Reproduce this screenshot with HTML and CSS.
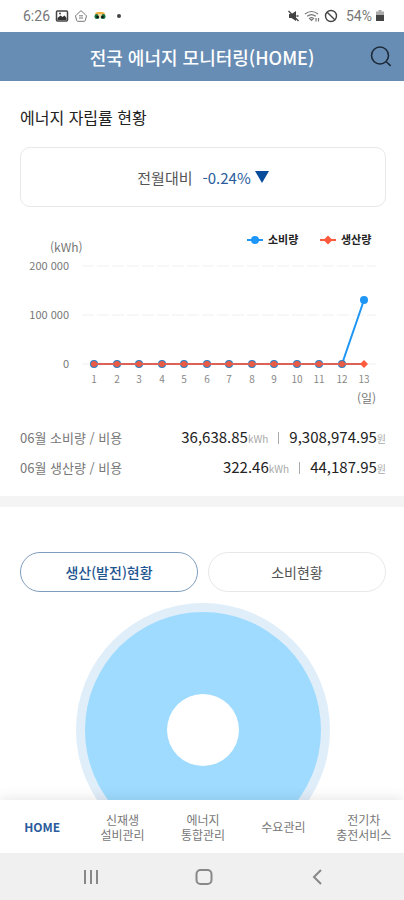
FILE: index.html
```html
<!DOCTYPE html>
<html lang="ko">
<head>
    <meta charset="UTF-8">
    <meta name="viewport" content="width=device-width, initial-scale=1">
    <title>전국 에너지 모니터링</title>
    <link rel="stylesheet" href="styles.css">
</head>
<body>
    <div class="status-bar">
        <div class="status-group">
            <span>6:26</span>
            <svg width="14" height="14" viewBox="0 0 14 14">
                <rect x="1.5" y="2" width="11" height="10" rx="1" fill="none" stroke="#444" stroke-width="1.5"/>
                <path d="M2.500 11V9l3-2.500 2 1.500 2-1.500 2 2.500v2z" fill="#333"/>
                <circle cx="5" cy="4.500" r="1" fill="#444"/>
            </svg>
            <svg width="14" height="14" viewBox="0 0 14 14" fill="none" stroke="#777">
                <path d="M2.500 5.800 7 1.700l4.500 4.100 1 1-1.200 4.700q-.2.800-1 .8H3.700q-.8 0-1-.8L1.500 6.800z"/>
                <path d="M5 6.800h4M5 9h4"/>
            </svg>
            <svg width="14" height="14" viewBox="0 0 14 14">
                <path d="M2 6q0-3 3-3h4q3 0 3 3z" fill="#f0b13c"/>
                <circle cx="4" cy="7.500" r="2.500" fill="#13713f"/>
                <circle cx="10" cy="7.500" r="2.500" fill="#13713f"/>
                <path d="M4.500 5h5L7 9.500z" fill="#f6d8a5"/>
                <circle cx="4.500" cy="8" r="1.200" fill="#111"/>
                <circle cx="9.500" cy="8" r="1.200" fill="#111"/>
            </svg>
            <span class="dot"></span>
        </div>
        <div class="status-group status-right">
            <svg width="13" height="14" viewBox="0 0 13 14">
                <path d="M2 5h2.500L9 2v10L4.500 9H2z" fill="#444"/>
                <path d="M1.500 2 11.500 12M9.500 7h2" stroke="#444" stroke-width="1.300"/>
            </svg>
            <svg width="16" height="14" viewBox="0 0 16 14" fill="none" stroke="#777" stroke-width="1.200">
                <path d="M1 5q6.500-5 13 0M3.200 7.300q4.300-3.300 8.600 0M5.400 9.400q2.100-1.500 4.200 0L7.500 11.500z"/>
                <path d="M12 12.500V9M14.500 9v3.500"/>
            </svg>
            <svg width="14" height="14" viewBox="0 0 14 14" fill="none" stroke="#444" stroke-width="1.400">
                <circle cx="7" cy="7" r="5.500"/>
                <path d="m3.200 3.200 7.600 7.600"/>
            </svg>
            <span class="battery-text">54%</span>
            <svg width="8" height="14" viewBox="0 0 8 14">
                <path d="M2.500 1h3v1.500H8V6H0V2.500h2.500z" fill="#aaa"/>
                <path d="M0 6h8v6H0z" fill="#444"/>
            </svg>
        </div>
    </div>

    <header class="header">
        <h1>전국 에너지 모니터링(HOME)</h1>
        <button class="search-button" type="button" aria-label="검색">
            <svg width="24" height="24" viewBox="0 0 24 24" fill="none" stroke="#1d2b3a" stroke-width="1.600">
                <circle cx="11" cy="10.500" r="8.500"/>
                <path d="m17 16.500 4.700 4.300"/>
            </svg>
        </button>
    </header>

    <main class="content">
        <section class="summary">
            <h2>에너지 자립률 현황</h2>
            <div class="compare-card">
                <span>전월대비</span>
                <span class="compare-value">-0.24%</span>
                <svg width="14" height="12" viewBox="0 0 14 12"><path d="M0 0h14L7 12z" fill="#0a4c9c"/></svg>
            </div>
        </section>

        <svg class="chart" viewBox="0 0 404 216" role="img" aria-label="소비량과 생산량">
            <!-- legend -->
            <g class="legend">
                <path d="M247 33h16" stroke="#1e96f5" stroke-width="2"/>
                <circle cx="255" cy="33" r="4" fill="#1e96f5"/>
                <text x="268" y="37">소비량</text>
                <path d="M320 33h16" stroke="#fb5a3c" stroke-width="2"/>
                <path d="M328 28.500l4.500 4.500-4.500 4.500-4.500-4.500z" fill="#fb5a3c"/>
                <text x="341" y="37">생산량</text>
            </g>
            <!-- axes -->
            <g class="unit">
                <text x="50" y="45">(kWh)</text>
                <text x="357" y="196">(일)</text>
            </g>
            <path class="grid-line" d="M82 59h294M82 108h294M82 157h294"/>
            <g class="y-labels">
                <text x="69" y="63">200 000</text>
                <text x="69" y="112">100 000</text>
                <text x="69" y="161">0</text>
            </g>
            <g class="x-labels">
                <text x="94" y="176">1</text>
                <text x="117" y="176">2</text>
                <text x="139" y="176">3</text>
                <text x="162" y="176">4</text>
                <text x="184" y="176">5</text>
                <text x="207" y="176">6</text>
                <text x="229" y="176">7</text>
                <text x="252" y="176">8</text>
                <text x="274" y="176">9</text>
                <text x="297" y="176">10</text>
                <text x="319" y="176">11</text>
                <text x="342" y="176">12</text>
                <text x="364" y="176">13</text>
            </g>
            <!-- consumption -->
            <path d="M94 157h248l22-64" fill="none" stroke="#1e96f5" stroke-width="2"/>
            <g fill="#2d7fc4">
                <circle cx="94" cy="157" r="4"/>
                <circle cx="117" cy="157" r="4"/>
                <circle cx="139" cy="157" r="4"/>
                <circle cx="162" cy="157" r="4"/>
                <circle cx="184" cy="157" r="4"/>
                <circle cx="207" cy="157" r="4"/>
                <circle cx="229" cy="157" r="4"/>
                <circle cx="252" cy="157" r="4"/>
                <circle cx="274" cy="157" r="4"/>
                <circle cx="297" cy="157" r="4"/>
                <circle cx="319" cy="157" r="4"/>
                <circle cx="342" cy="157" r="4"/>
            </g>
            <circle cx="364" cy="93" r="4" fill="#1e96f5"/>
            <!-- production -->
            <path d="M94 157h270" stroke="#dc6257" stroke-width="2"/>
            <g fill="#e85c45">
                <circle cx="94" cy="157" r="3"/>
                <circle cx="117" cy="157" r="3"/>
                <circle cx="139" cy="157" r="3"/>
                <circle cx="162" cy="157" r="3"/>
                <circle cx="184" cy="157" r="3"/>
                <circle cx="207" cy="157" r="3"/>
                <circle cx="229" cy="157" r="3"/>
                <circle cx="252" cy="157" r="3"/>
                <circle cx="274" cy="157" r="3"/>
                <circle cx="297" cy="157" r="3"/>
                <circle cx="319" cy="157" r="3"/>
                <circle cx="342" cy="157" r="3"/>
            </g>
            <path d="M364 153l4 4-4 4-4-4z" fill="#fb5a3c"/>
        </svg>

        <table class="totals">
            <tr>
                <th scope="row">06월 소비량 / 비용</th>
                <td>36,638.85<small>kWh</small><i class="bar"></i>9,308,974.95<small>원</small></td>
            </tr>
            <tr>
                <th scope="row">06월 생산량 / 비용</th>
                <td>322.46<small>kWh</small><i class="bar"></i>44,187.95<small>원</small></td>
            </tr>
        </table>

        <section class="status-section">
            <div class="tabs">
                <button class="tab active" type="button">생산(발전)현황</button>
                <button class="tab" type="button">소비현황</button>
            </div>
            <svg class="donut" width="256" height="256" viewBox="0 0 256 256">
                <circle cx="128" cy="128" r="127" fill="#e0eefa"/>
                <circle cx="128" cy="128" r="118" fill="#9edbff"/>
                <circle cx="128" cy="128" r="36" fill="#fff"/>
            </svg>
        </section>
    </main>

    <nav class="tab-bar">
        <a class="current" href="#home">HOME</a>
        <a href="#renewable">신재생<br>설비관리</a>
        <a href="#energy">에너지<br>통합관리</a>
        <a href="#demand">수요관리</a>
        <a href="#ev">전기차<br>충전서비스</a>
    </nav>

    <div class="system-bar">
        <button type="button" aria-label="최근 앱">
            <svg width="18" height="18" viewBox="0 0 18 18" stroke="#888" stroke-width="2"><path d="M3 2v14M9 2v14M15 2v14"/></svg>
        </button>
        <button type="button" aria-label="홈">
            <svg width="18" height="18" viewBox="0 0 18 18" fill="none" stroke="#888" stroke-width="2"><rect x="1.5" y="2" width="15" height="14" rx="4"/></svg>
        </button>
        <button type="button" aria-label="뒤로">
            <svg width="18" height="18" viewBox="0 0 18 18" fill="none" stroke="#888" stroke-width="2"><path d="M13 2 6 9l7 7"/></svg>
        </button>
    </div>
</body>
</html>
```
FILE: styles.css
```css
* {
    box-sizing: border-box;
}
body {
    margin: 0;
    height: 100vh;
    display: flex;
    flex-direction: column;
    background: #fff;
    color: #222;
    font-family: "Noto Sans CJK KR", "Noto Sans", sans-serif;
}
svg {
    display: block;
    flex-shrink: 0;
}
button {
    font-family: inherit;
    background: none;
    border: none;
    padding: 0;
    cursor: pointer;
}
.status-bar {
    height: 32px;
    padding: 0 20px 0 23px;
    display: flex;
    justify-content: space-between;
    align-items: center;
    flex-shrink: 0;
    font-family: Roboto, sans-serif;
    font-size: 14px;
    color: #777;
}
.status-group {
    display: flex;
    align-items: center;
    gap: 5px;
}
.status-right {
    gap: 4px;
}
.battery-text {
    margin-left: 4px;
}
.dot {
    width: 4px;
    height: 4px;
    margin-left: 5px;
    border-radius: 50%;
    background: #444;
}
.header {
    height: 49px;
    padding: 0 11px;
    display: grid;
    grid-template-columns: 24px 1fr 24px;
    align-items: center;
    flex-shrink: 0;
    background: #688db4;
}
.header h1 {
    grid-column: 2;
    margin: 0;
    text-align: center;
    font-size: 18px;
    font-weight: 500;
    color: #fff;
}
.content {
    flex: 1;
    min-height: 0;
    overflow: hidden;
}
.summary {
    padding: 24px 18px 0 20px;
}
.summary h2 {
    margin: 0 0 18px;
    font-size: 16px;
    line-height: 24px;
    font-weight: 400;
}
.compare-card {
    height: 60px;
    display: flex;
    justify-content: center;
    align-items: center;
    border: 1px solid #e8e8e8;
    border-radius: 10px;
    font-size: 15px;
    color: #555;
}
.compare-value {
    margin: 0 4px 0 10px;
    color: #2a5c9c;
}
.chart {
    width: 100%;
}
.legend text {
    font-size: 11px;
    font-weight: 700;
    fill: #222;
}
.unit text {
    font-size: 12px;
    fill: #777;
}
.grid-line {
    stroke: #f0f0f0;
    stroke-dasharray: 12 3;
}
.y-labels text {
    font-size: 11px;
    fill: #777;
    text-anchor: end;
}
.x-labels text {
    font-size: 10px;
    fill: #888;
    text-anchor: middle;
}
.totals {
    width: 100%;
    padding: 0 18px 13px 20px;
    border-spacing: 0;
    border-bottom: 11px solid #f4f4f4;
}
.totals th,
.totals td {
    height: 30px;
    padding: 0;
    line-height: 20px;
    white-space: nowrap;
}
.totals th {
    text-align: left;
    font-size: 13px;
    font-weight: 400;
    color: #777;
}
.totals td {
    text-align: right;
    font-size: 15px;
    color: #222;
}
.totals small {
    font-size: 10px;
    color: #aaa;
}
.bar {
    display: inline-block;
    width: 1px;
    height: 12px;
    margin: 0 10px;
    vertical-align: -1px;
    background: #aaa;
}
.status-section {
    padding: 45px 18px 0 20px;
}
.tabs {
    display: grid;
    grid-template-columns: 1fr 1fr;
    gap: 10px;
    margin-bottom: 10px;
}
.tab {
    height: 40px;
    border: 1px solid #e8e8e8;
    border-radius: 20px;
    font-size: 14px;
    color: #555;
}
.tab.active {
    border-color: #7f9dbd;
    font-weight: 500;
    color: #1f5591;
}
.donut {
    margin: 0 auto;
}
.tab-bar {
    height: 53px;
    padding-left: 2px;
    display: grid;
    grid-template-columns: repeat(5, 1fr);
    align-items: center;
    flex-shrink: 0;
    background: #fff;
    box-shadow: 0 0 14px rgba(0, 0, 0, 0.12);
    clip-path: inset(-16px 0 0 0);
}
.tab-bar a {
    text-align: center;
    text-decoration: none;
    font-size: 12px;
    line-height: 15px;
    color: #777;
}
.tab-bar .current {
    font-weight: 700;
    color: #2a5c9c;
}
.system-bar {
    height: 47px;
    padding: 0 30px 0 34px;
    display: grid;
    grid-template-columns: repeat(3, 1fr);
    align-items: center;
    justify-items: center;
    flex-shrink: 0;
    background: #f0f0f0;
}
```
